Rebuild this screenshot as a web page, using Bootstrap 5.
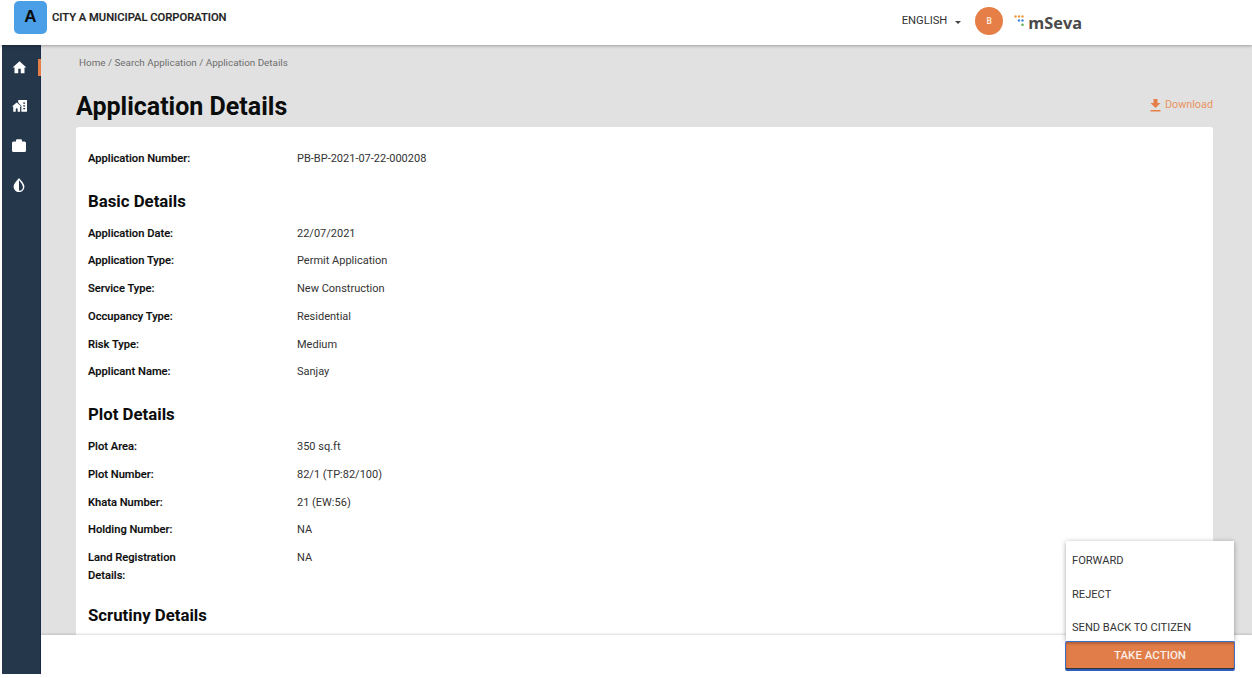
<!DOCTYPE html>
<html lang="en"><head><meta charset="utf-8">
<title>Application Details</title>
<link href="https://cdn.jsdelivr.net/npm/bootstrap@5.3.0/dist/css/bootstrap.min.css" rel="stylesheet">
<style>
html,body{height:100%;overflow:hidden}
body{font-family:Roboto,"Liberation Sans",sans-serif;background:#fff;color:#0b0c0c}
.app-shell{width:1252px;height:678px;display:flex;flex-direction:column;position:relative;overflow:hidden}
.top-head{height:45px;flex:none;background:#fff;box-shadow:0 1px 3px rgba(0,0,0,.3);position:relative;z-index:3;padding:0 170px 0 14px}
.logo-tile{width:33px;height:33px;background:#4a9fe6;border-radius:5px;font:700 17px "Liberation Sans",sans-serif;color:#0b0c0c;margin-top:-11px}
.city-name{font:500 11.2px Roboto,sans-serif;margin-left:5px;margin-top:-11px;color:#222;-webkit-text-stroke:.2px #222}
.head-tools{margin-top:-3px}
.lang-txt{font-size:11.2px;color:#333;white-space:nowrap;margin-top:1px}
.caret-ic{width:0;height:0;border-left:3px solid transparent;border-right:3px solid transparent;border-top:3px solid #444;margin:3px 0 0 8px}
.avatar-dot{width:28px;height:28px;border-radius:50%;background:#e57f47;color:#fbe7da;font-size:8.5px;font-weight:700;margin-left:14px}
.seva-mark{margin-left:11px;margin-top:-1px}
.seva-txt{font:700 16.3px "Open Sans",sans-serif;color:#4a4a4a;margin-left:3px;margin-top:3px}
.body-row{flex:1;min-height:0;display:flex}
.side-rail{width:39px;flex:none;background:#24374b;margin-left:2px;padding-top:15px;height:629px;position:relative;border-right:1px solid #1d2c4c}
.rail-item{height:39.3px;display:flex;justify-content:center;margin-left:-4px}
.rail-mark{position:absolute;left:36px;top:14px;width:3px;height:17px;background:#e57f47}
.right-col{flex:1;min-width:0;display:flex;flex-direction:column}
.main-pane{height:590px;flex:none;background:#e1e1e1;overflow:hidden;padding:0 39px 0 35px}
.crumbs{font-size:9.87px;color:#6e6e6e;padding-top:12px;line-height:11px;margin-left:3px}
.title-row{margin-top:25px;height:34px}
.page-title{font:700 25px/28px Roboto,sans-serif;color:#0b0c0c;margin:0}
.dl-link{font-size:10.8px;color:#e9935f;text-decoration:none;margin-top:4px}
.sheet{background:#fff;border-radius:3px 3px 0 0;height:520px;padding:23px 12px}
.kv-row{display:flex;font-size:11.15px;line-height:18px;margin-bottom:9.8px}
.kv-k{width:209px;font-weight:500;color:#0b0c0c;flex:none;-webkit-text-stroke:.15px #0b0c0c}
.kv-v{color:#333;font-size:11px}
.sect-h{font:700 16.8px/20px Roboto,sans-serif;color:#0b0c0c;margin:22.5px 0 14px}
.sect-h:last-child{margin-top:20px}
.foot-bar{height:43px;flex:none;background:#fff;box-shadow:0 -1px 2px rgba(0,0,0,.15);position:relative;z-index:2}
.act-menu{position:absolute;left:1066px;top:541px;width:168px;height:100px;background:#fff;box-shadow:0 1px 5px rgba(0,0,0,.35);z-index:4;padding-top:3px}
.act-opt{font-size:11.1px;line-height:33.5px;color:#333;padding-left:6px;white-space:nowrap}
.act-btn{position:absolute;left:1065px;top:641px;width:170px;height:30px;background:#e07d49;color:#fbeee6;border:1px solid #3f6ec6;border-bottom:2px solid #2d5cb8;border-radius:2px;font-size:11.5px;font-weight:500;padding:0;z-index:5;box-shadow:inset 0 -1px 0 #333,inset 0 2px 2px rgba(90,50,20,.35)}
</style></head><body>
<div class="app-shell">
<header class="top-head d-flex align-items-center">
<div class="logo-tile d-flex align-items-center justify-content-center">A</div>
<div class="city-name">CITY A MUNICIPAL CORPORATION</div>
<div class="head-tools ms-auto d-flex align-items-center">
<span class="lang-txt">ENGLISH</span><span class="caret-ic"></span>
<span class="avatar-dot d-flex align-items-center justify-content-center">B</span>
<svg class="seva-mark" width="11" height="12" viewBox="0 0 11 12"><circle cx="1.500" cy="1.500" r="1.200" fill="#ef9a3d"/><circle cx="5" cy="1.500" r="1.200" fill="#ef9a3d"/><circle cx="8.500" cy="1.500" r="1.200" fill="#ef9a3d"/><circle cx="5" cy="5.500" r="1.200" fill="#3f86d6"/><circle cx="8.500" cy="5.500" r="1.200" fill="#3f86d6"/><circle cx="8.500" cy="9.800" r="1.300" fill="#5fb356"/></svg>
<span class="seva-txt">mSeva</span>
</div>
</header>
<div class="body-row">
<nav class="side-rail">
<span class="rail-mark"></span>
<div class="rail-item"><svg width="15" height="15" viewBox="0 0 24 24" fill="#fff"><path d="M10 21v-7h4v7h6v-9h3L12 2 1 12h3v9z"/></svg></div>
<div class="rail-item"><svg width="15" height="13" viewBox="0 0 24 20" fill="#fff"><path d="M7.500 5 0 11.500h2V20h4v-4a1.500 1.500 0 0 1 3 0v4h4v-8.500h2z"/><path d="M10 1h14v19h-9v-9.500L10 5.500z"/><path d="M18 5h3v2h-3zM18 9.500h3v2h-3zM18 14h3v2h-3z" fill="#24374b"/></svg></div>
<div class="rail-item"><svg width="14" height="13" viewBox="0 0 14 13" fill="#fff"><path d="M5 2.500V1.500h4v1zM0 4a1.500 1.500 0 0 1 1.500-1.500H4V1.500A1.200 1.200 0 0 1 5.200.3h3.600A1.200 1.200 0 0 1 10 1.500v1h2.500A1.500 1.500 0 0 1 14 4v7.500a1.500 1.500 0 0 1-1.500 1.500h-11A1.500 1.500 0 0 1 0 11.500z"/></svg></div>
<div class="rail-item"><svg width="12" height="14" viewBox="0 0 20 24"><path d="M10 2C6 7 2 10 2 15a8 8 0 0 0 16 0C18 10 14 7 10 2z" fill="none" stroke="#fff" stroke-width="2.500"/><path d="M10 3v20a8 8 0 0 1-8-8c0-5 4-8 8-12z" fill="#fff"/></svg></div>
</nav>
<div class="right-col">
<main class="main-pane">
<div class="crumbs">Home / Search Application / Application Details</div>
<div class="title-row d-flex justify-content-between align-items-start">
<h1 class="page-title">Application Details</h1>
<a class="dl-link d-flex align-items-center gap-1" href="#"><svg width="11" height="13" viewBox="0 0 10 13" fill="#e57f47"><path d="M3 0h4v4h3L5 9 0 4h3zM0 11h10v1.500H0z"/></svg>Download</a>
</div>
<section class="sheet">
<div class="kv-row"><div class="kv-k">Application Number:</div><div class="kv-v">PB-BP-2021-07-22-000208</div></div>
<h2 class="sect-h">Basic Details</h2>
<div class="kv-row"><div class="kv-k">Application Date:</div><div class="kv-v">22/07/2021</div></div>
<div class="kv-row"><div class="kv-k">Application Type:</div><div class="kv-v">Permit Application</div></div>
<div class="kv-row"><div class="kv-k">Service Type:</div><div class="kv-v">New Construction</div></div>
<div class="kv-row"><div class="kv-k">Occupancy Type:</div><div class="kv-v">Residential</div></div>
<div class="kv-row"><div class="kv-k">Risk Type:</div><div class="kv-v">Medium</div></div>
<div class="kv-row"><div class="kv-k">Applicant Name:</div><div class="kv-v">Sanjay</div></div>
<h2 class="sect-h">Plot Details</h2>
<div class="kv-row"><div class="kv-k">Plot Area:</div><div class="kv-v">350 sq.ft</div></div>
<div class="kv-row"><div class="kv-k">Plot Number:</div><div class="kv-v">82/1 (TP:82/100)</div></div>
<div class="kv-row"><div class="kv-k">Khata Number:</div><div class="kv-v">21 (EW:56)</div></div>
<div class="kv-row"><div class="kv-k">Holding Number:</div><div class="kv-v">NA</div></div>
<div class="kv-row"><div class="kv-k">Land Registration<br>Details:</div><div class="kv-v">NA</div></div>
<h2 class="sect-h">Scrutiny Details</h2>
</section>
</main>
<div class="foot-bar"></div>
</div>
</div>
<div class="act-menu"><div class="act-opt">FORWARD</div><div class="act-opt">REJECT</div><div class="act-opt">SEND BACK TO CITIZEN</div></div>
<button class="act-btn" type="button">TAKE ACTION</button>
</div>
<script src="https://cdn.jsdelivr.net/npm/bootstrap@5.3.0/dist/js/bootstrap.bundle.min.js"></script>
</body></html>
